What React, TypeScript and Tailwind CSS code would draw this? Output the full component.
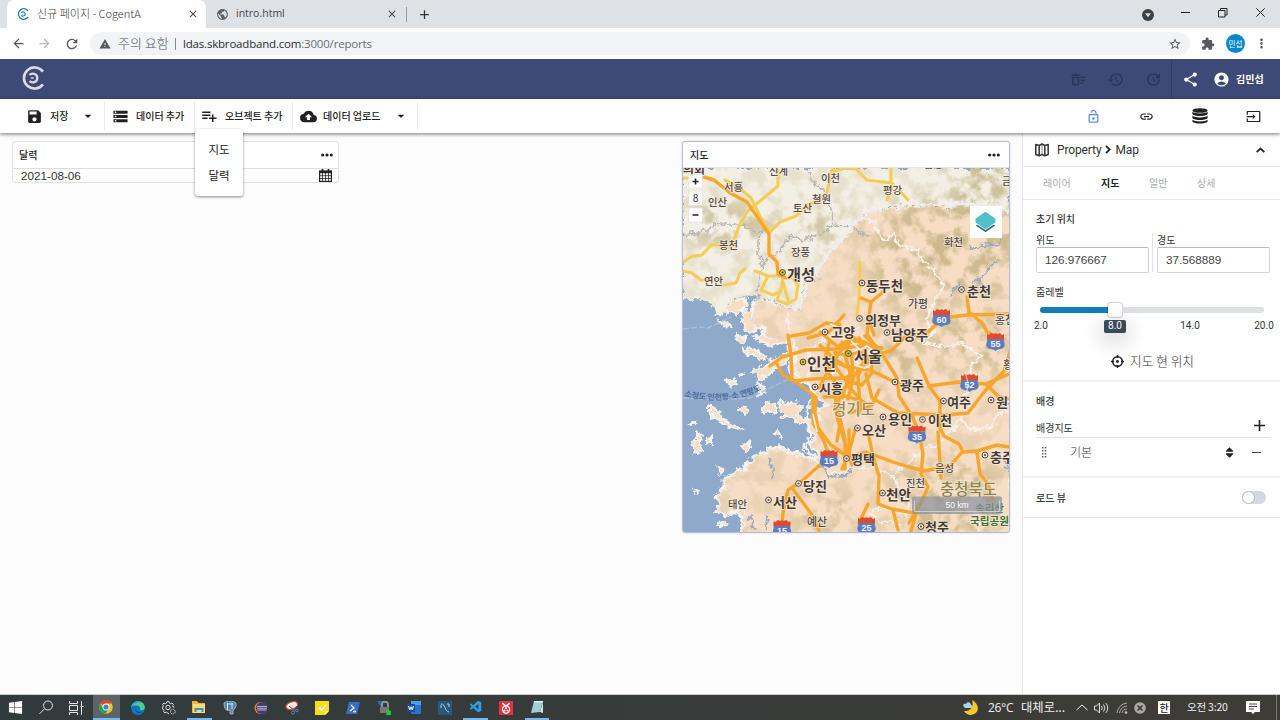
import React from "react";
import {
  MdSave, MdStorage, MdPlaylistAdd, MdCloudUpload, MdArrowDropDown, MdHistory, MdUpdate, MdShare,
  MdAccountCircle, MdOutlineLockOpen, MdLink, MdInput, MdExtension, MdMoreVert, MdRefresh,
  MdArrowBack, MdArrowForward, MdWarning, MdPublic, MdStarBorder, MdClose, MdAdd, MdOutlineDeleteSweep,
} from "react-icons/md";
import { FaWindows, FaSort } from "react-icons/fa";
import { VscVscode } from "react-icons/vsc";

const KR = "font-['Noto_Sans_CJK_KR',sans-serif]";

/* ---------- logo ---------- */
function Logo({ size, color }: { size: number; color: string }) {
  return (
    <svg width={size} height={size} viewBox="0 0 24 24" fill="none" stroke={color} strokeWidth="2.600">
      <path d="M22 5.600A10.600 10.600 0 1 0 22 18.400" />
      <path d="M8.500 9.100C10.500 6.800 16.300 7.200 16.300 12s-5.800 5.200-7.800 2.900" strokeWidth="2.300" />
      <path d="M9.800 12h3" strokeWidth="1.400" />
    </svg>
  );
}

/* ---------- browser chrome ---------- */
function Browser() {
  return (
    <>
      <div className="flex h-[28px] shrink-0 bg-[#dee1e6] text-[10.5px] text-[#45494d]">
        <div className="w-[7px]" />
        <div className="flex w-[199px] items-center rounded-t-[7px] bg-white pl-[10px] pr-[5px]">
          <Logo size={12} color="#167fa6" />
          <span className={`ml-[8px] w-[150px] whitespace-nowrap pb-[2px] text-[11px] font-light text-[#333] ${KR}`}>신규 페이지 - CogentA</span>
          <MdClose size={12} />
        </div>
        <div className="flex w-[200px] items-center pl-[10px]">
          <MdPublic size={13} className="text-[#5f6368]" />
          <span className="ml-[7px] w-[150px] font-['Open_Sans',sans-serif] text-[10.5px]">intro.html</span>
          <MdClose size={12} />
        </div>
        <div className="mt-[7px] h-[15px] w-px bg-[#9a9da1]" />
        <div className="flex w-[34px] items-center justify-center"><MdAdd size={15} className="text-[#333]" /></div>
        <div className="flex-1" />
        <div className="flex w-[24px] items-center pl-[2px] pt-px">
          <svg width="12" height="12" viewBox="0 0 12 12"><circle cx="6" cy="6" r="6" fill="#3c4043" /><path d="M3 4.3h6L6 8.3z" fill="#dee1e6" /></svg>
        </div>
        <div className="flex w-[116px] items-center justify-between pb-[3px] pl-[17px] pr-[15px]">
          <svg width="9" height="9"><path d="M0 4.5h9" stroke="#222" /></svg>
          <svg width="10" height="10" fill="none" stroke="#222"><path d="M.5 2.5h6.500v6.500h-6.500zM2.500 2.500v-2h6.500v6.500h-2" /></svg>
          <svg width="9" height="9" stroke="#222"><path d="M.3.3l8.400 8.400M8.700.3l-8.400 8.400" /></svg>
        </div>
      </div>
      <div className="flex h-[31px] shrink-0 items-center bg-white text-[#55585c]">
        <div className="w-[37px] pl-[11px]"><MdArrowBack size={15} /></div>
        <div className="w-[27px]"><MdArrowForward size={15} className="text-[#b4b6b9]" /></div>
        <div className="w-[26px]"><MdRefresh size={16} /></div>
        <div className="flex h-[23px] w-[1100px] items-center rounded-full bg-[#f1f3f4] pl-[9px]">
          <MdWarning size={12} />
          <span className={`ml-[7px] w-[57px] whitespace-nowrap pb-px text-[13px] font-light ${KR}`}>주의 요함</span>
          <span className="mr-[7px] h-[12px] w-px bg-[#888]" />
          <span className="flex-1 whitespace-nowrap font-['Open_Sans',sans-serif] text-[11.500px] tracking-[-0.19px] text-[#6b6e72]"><span className="text-[#2b2d30]">ldas.skbroadband.com</span>:3000/reports</span>
          <MdStarBorder size={14} className="mr-[8px]" />
        </div>
        <div className="w-[36px] pl-[11px]"><MdExtension size={14} /></div>
        <div className={`flex h-[19px] w-[19px] items-center justify-center rounded-full bg-[#0a87cf] text-[7.500px] text-white ${KR}`}>민섭</div>
        <div className="pl-[9px]"><MdMoreVert size={15} /></div>
      </div>
    </>
  );
}

/* ---------- application bars ---------- */
function AppHeader() {
  return (
    <div className="flex h-[40px] shrink-0 items-center bg-[#3d4977]">
      <div className="w-[1070px] pb-[3px] pl-[21px]"><Logo size={24} color="#dcdcdc" /></div>
      <div className="w-[37px] text-[#2b3459]"><MdOutlineDeleteSweep size={17} /></div>
      <div className="w-[38px] text-[#2b3459]"><MdHistory size={17} /></div>
      <div className="w-[26px] text-[#2b3459]"><MdUpdate size={17} /></div>
      <div className="h-full w-px bg-[#333d68]" />
      <div className="w-[41px] pl-[10px] text-white"><MdShare size={17} /></div>
      <div className="w-[23px] text-white"><MdAccountCircle size={17} /></div>
      <span className={`whitespace-nowrap pb-[2px] text-[10px] font-bold text-white ${KR}`}>김민섭</span>
    </div>
  );
}

function Disks() {
  return (
    <svg width="16" height="16" viewBox="0 0 16 16" fill="#222">
      <ellipse cx="8" cy="2.500" rx="7.600" ry="2.300" />
      <path d="M.4 3.800c2.500 2.200 12.700 2.200 15.200 0v2.500c-2 2.400-13.200 2.400-15.200 0zM.4 7.800c2.500 2.200 12.700 2.200 15.200 0v2.500c-2 2.400-13.200 2.400-15.200 0zM.4 11.800c2.500 2.200 12.700 2.200 15.200 0v1.700c-2 2.800-13.200 2.800-15.200 0z" />
    </svg>
  );
}

function ActionBar() {
  const label = `whitespace-nowrap pb-[2px] text-[10px] font-medium ${KR}`;
  return (
    <div className="relative z-10 flex h-[34px] shrink-0 items-center bg-white text-[#222] shadow-[0_1px_4px_rgba(0,0,0,.55)]">
      <div className="flex h-[28px] w-[105px] items-center border-r border-[#ececec] pl-[26px]">
        <MdSave size={17} /><span className={`ml-[7px] w-[30px] ${label}`}>저장</span><MdArrowDropDown size={16} />
      </div>
      <div className="flex h-[28px] w-[90px] items-center border-r border-[#ececec] pl-[7px]">
        <MdStorage size={17} /><span className={`ml-[7px] ${label}`}>데이터 추가</span>
      </div>
      <div className="relative flex h-[28px] w-[98px] items-center border-r border-[#ececec] pl-[5px]">
        <MdPlaylistAdd size={18} /><span className={`ml-[7px] ${label}`}>오브젝트 추가</span>
        <div className={`absolute left-0 top-[27px] flex h-[67px] w-[48px] flex-col items-center rounded-[3px] bg-white pt-[7px] text-[11.500px] leading-[26px] shadow-[0_1px_3px_rgba(0,0,0,.45)] ${KR}`}>
          <span>지도</span><span>달력</span>
        </div>
      </div>
      <div className="flex h-[28px] w-[125px] items-center border-r border-[#ececec] pl-[7px]">
        <MdCloudUpload size={17} /><span className={`ml-[6px] w-[70px] ${label}`}>데이터 업로드</span><MdArrowDropDown size={16} />
      </div>
      <div className="flex-1" />
      <div className="w-[53px]"><MdOutlineLockOpen size={15} className="text-[#5d8bf0]" /></div>
      <div className="w-[53px]"><MdLink size={15} /></div>
      <div className="w-[54px]"><Disks /></div>
      <div className="w-[34px]"><MdInput size={15} /></div>
    </div>
  );
}

/* ---------- map ---------- */
type Place = [string, number, number, number, string?, number?];
const INK = "#463a35";
const MINOR = "#544a46";
const places: Place[] = [
  ["의회", 683, 170, 22, INK, 700], ["서흥", 724, 187, 19], ["인산", 708, 202, 19], ["신계", 769, 171, 19], ["이천", 821, 178.5, 19],
  ["철원", 812, 199.5, 19], ["토산", 793, 208.5, 19], ["봉천", 719, 245.5, 19], ["장풍", 791, 252, 19], ["연안", 704, 281, 19],
  ["평강", 883, 190, 19], ["금강", 1002, 181, 19], ["금성", 924, 164, 19], ["화천", 944, 242, 19], ["개성", 787, 275, 28, INK, 700],
  ["동두천", 866, 286, 37, INK, 700], ["춘천", 967, 291, 24, INK, 700], ["가평", 908, 304, 20], ["의정부", 865, 320.5, 36, INK, 700],
  ["홍천", 995, 320, 20], ["고양", 831, 332, 24, INK, 700], ["남양주", 891, 335, 37, INK, 700], ["서울", 854, 357, 28, INK, 700],
  ["인천", 807, 364.5, 29, INK, 700], ["시흥", 819, 388.5, 24, INK, 700], ["광주", 900, 385, 24, INK, 700],
  ["경기도", 832, 409, 43, "#988952", 500], ["여주", 947, 402, 24, INK, 700], ["원주", 996, 402, 24, INK, 700], ["횡성", 1003, 365, 20],
  ["용인", 888, 419, 24, INK, 700], ["이천", 928, 420, 24, INK, 700], ["오산", 862, 430, 24, INK, 700],
  ["충주", 990, 457, 24, INK, 700], ["평택", 851, 459, 24, INK, 700], ["음성", 935, 468, 19], ["진천", 906, 483, 19],
  ["당진", 803, 486, 24, INK, 700], ["서산", 773, 502, 24, INK, 700], ["태안", 728, 504, 19], ["천안", 886, 495, 25, INK, 700],
  ["충청북도", 940, 489, 57, "#8f8448", 500], ["청주", 925, 527, 24, INK, 700], ["예산", 807, 522.5, 20],
  ["속리산", 975, 508.5, 29, "#42712f", 600], ["국립공원", 970, 521, 39, "#42712f", 600],
];
const dots: [number, number, boolean?][] = [
  [782.5, 272.5, true], [862, 283], [859.5, 318.5], [961.5, 289.5], [825, 332], [887, 332.500], [803, 362, true], [848.500, 353.500, true],
  [815, 387], [895, 382], [943.500, 401], [991, 400], [883, 417], [922.500, 419.500], [857.500, 428], [985, 455], [846.500, 458.500],
  [798.500, 483.500], [768.500, 500], [882.500, 493], [921, 526.500],
];
const shields: [string, number, number][] = [
  ["60", 941.500, 318], ["55", 995.500, 342], ["52", 969.500, 383], ["35", 917, 434.500], ["15", 829, 459], ["15", 782, 529], ["25", 866.500, 526],
];
const yellowRoads = [
  "M683 178h10M725 180l12 6 14 12 10 20 9 14M778 168v18l-18 15-13 11-8 14-5 15",
  "M683 262l10-6 9-1 9-10h14l6 2M683 271l9 2 9 7 10 1M724 285l12-2 4-10 5-4M770 232l10-10 16-6 10-10 12-6 10-3M827 192l4-20 2-4M831 172l15-4 10 1 11 11 24 3v-14M893 184l-6 16M899 190l9 10",
  "M755 271l13 5h12M768 276l-7 14 12 5 8-4 2-14M781 289l-4 11 10 4 9-5 2-14-8-10M783 282l5 18M860 262l-1 38-2 15",
];
const orangeRoads = [
  "M704 177l10 3 16 13 17 9 22 32v20l8 8 1 12 8 4",
  "M861 298l10 4 12-10M871 302l-2 14-2 18 8 12M840 325l-14-2-17 10-18 3M844 315l-15 17-21 6",
  "M967 297l2 15 14 12 4 8 16 8M941 318l27-3 41-1M942 319l-15 14-22 4-14 14-15 4",
  "M770 366l12-9 24-7 30-1 24-3 22 2M777 364l6 11 10 6 20-2 30-1 16-5M788 335l3 20 1 24 24 18-1 16 3 15 13 17 14 10",
  "M813 395v28l10 16 6 16M830 340l-5 18 4 16 6 8 1 32 9 29 7 22M845 345l-12 17-14 26M820 345l12 12 13 9 23 4M820 332l18 15 15-10 12 10-2 17-12 16-12 15v20l6 24v30",
  "M835 352l12 4 12-4 12 7 1 14-10 12-16-4-10-13zM838 363l13 6 19-6M842 342l10 16 1 21-5 20M850 338l-5 17 5 18-8 25M859 338l8 19-9 19 2 30",
  "M865 336l13 12 8 12 11 18 2 18 13 20 7 16 4 22-2 20 7 13-7 16-12 20M866 374l6 24 26 15 24 1 23 1 23-2 17-22 19-20 7-22M917 358l12 28 11 15v27l4 8 15 8 4 8 14-1 20-6 12 2",
  "M929 386l30-4 27 2 23-10M986 384l13 13 10 2M846 458l20-6 27 10 13 4 18 5 26-5 13-15M977 452l3 22 8 10 5 17M855 430l-7 26-6 13",
  "M868 432l5 24 6 20-1 28 14 5 22 4 5-8M868 504l-9 19M893 510l5 20M919 504l-8 27M822 463l-20 18-14 9-5 23-2 18M792 488l12 16 11 15 4 12M938 432l3 46M840 423l-3 18M849 430v25M879 390l-7 15M870 370l31 15",
  "M847 385l14 15-2 13M824 397l22-1 18 6M850 413l20-7M860 367l17-12M874 335l-5-15M840 345l20-5 20 10",
];
const northLand = "M683 168H1009V214L980 209 960 205 935 207 900 206 880 208 865 214 856 221 845 231 840 241 825 256 817 270 806 287 799 309 789 307 770 301 751 297 740 299 727 306 727 316 716 315 711 304 698 299 683 301Z";
const southLand = "M1012 210L980 209 960 205 935 207 900 206 880 208 865 214 856 221 845 231 840 241 825 256 817 270 806 287 799 309 789 307 770 301 756 300 755 304 749 318 757 329 765 328 763 334 772 340 778 343 790 341 788 350 795 357 788 365 791 375 799 381 808 385 813 392 821 401 828 405 815 411 820 418 804 420 810 431 816 437 809 443 818 454 816 460 821 464 810 459 791 451 777 447 774 450 768 447 766 452 753 457 752 463 744 465 747 471 738 469 733 475 724 479 724 487 716 496 720 503 716 511 728 515 737 510 743 520 742 536H1012Z";
const islands = "M727 303l8-4 12 1 1 6-12 7-8-1zM744 309l8 5 3 17-6 2-7-10zM753 369l12-3 8-7 11-4 7-1-8 10-9 5-5 7-9 3-8-6zM744 350l5-3 9 4 9 7-5 2-8-5h-7zM754 337l8-4 10 6 8 5-8 2-10-4zM763 407l4-5 8 1 1 8-7 2-6-2zM781 401l7 4 7-3 7 6-4 8 10 4-7 6-8-8-9-1-5-7zM710 404l6 5 6 6-4 4-8-6zM720 419l10 4 12 6-5 2-16-8zM740 407l9 2-3 5-8-4zM758 382l5 5 2 6-5 2zM691 443l3-4 5 3 3 9-6 2zM697 432l5 4-2 7-3-3zM707 438l4-1v6l-4 1zM711 415l4-1v4l-4 1zM691 424l4-3 1 3zM727 381l6-1 2 4-6 3zM744 452l7-5-1-5-7 3zM719 320l9 2 3 5-8-1zM737 335l10 4-3 5-8-5zM774 432l4-3 2 8zM718 467l7 3-4 5zM741 509l3-3 2 5zM694 490l3 1-2 2zM720 521l8 3-8 3zM736 375l6-2 1 2z";

function MapView() {
  return (
    <svg className="block h-[364px] w-[326px]" viewBox="683 168 326 364" fontFamily="'Noto Sans CJK KR', sans-serif">
      <defs>
        <filter id="relief" x="0" y="0" width="100%" height="100%" colorInterpolationFilters="sRGB">
          <feTurbulence type="fractalNoise" baseFrequency=".06" numOctaves="5" seed="12" />
          <feColorMatrix values="0 0 0 0 .7  0 0 0 0 .64  0 0 0 0 .42  0 4.500 0 0 -1.950" />
        </filter>
        <filter id="coast" x="-5%" y="-5%" width="110%" height="110%" colorInterpolationFilters="sRGB">
          <feTurbulence type="fractalNoise" baseFrequency=".18" numOctaves="3" seed="4" />
          <feDisplacementMap in="SourceGraphic" scale="9" xChannelSelector="R" yChannelSelector="G" />
        </filter>
        <filter id="lumpy"><feGaussianBlur stdDeviation="12" /></filter>
        <clipPath id="landClip"><path d={northLand} /><path d={southLand} /></clipPath>
        <mask id="hills">
          <rect x="683" y="168" width="326" height="364" fill="#4c4c4c" />
          <g filter="url(#lumpy)" fill="#fff">
            <ellipse cx="920" cy="255" rx="48" ry="55" /><ellipse cx="985" cy="215" rx="38" ry="85" />
            <ellipse cx="970" cy="345" rx="35" ry="30" /><ellipse cx="900" cy="360" rx="18" ry="35" />
            <ellipse cx="730" cy="225" rx="45" ry="20" /><ellipse cx="820" cy="225" rx="30" ry="16" />
            <ellipse cx="950" cy="500" rx="60" ry="38" /><ellipse cx="825" cy="515" rx="25" ry="20" />
          </g>
        </mask>
      </defs>
      <rect x="683" y="168" width="326" height="364" fill="#8fa9cb" />
      <g filter="url(#coast)">
        <path d={southLand} fill="#f6ddc4" stroke="#f5f2ee" strokeWidth="3" />
        <path d={islands} fill="#f6ddc4" stroke="#f3f2ee" strokeWidth="2" />
        <path d={northLand} fill="#f3efe4" />
      </g>
      <g clipPath="url(#landClip)"><g mask="url(#hills)"><rect x="683" y="168" width="326" height="364" filter="url(#relief)" opacity=".62" /></g></g>
      <g filter="url(#coast)" fill="none">
        <path d="M683 235l17-3 18-8 22 0 15 8 8-2M763 230l-5 10v14l5 8-4 14-2 13 2 9M765 262l12-9 14-17 12 4 20-6 7-9 23 1 7 6 11 4M807 168l6 13 15 14 3 13 1 19" stroke="#b7b4b3" strokeWidth="1.500" />
        <path d="M727 305l3-6 18-2 22 3 17 8 12 2 4-20 3-9 16-1" stroke="#aeb2bb" strokeWidth="1.200" strokeDasharray="3 2" />
        <path d="M799 309l8-22 10-16 15-22 12-12 12-16 20-12 35-3 50-3 50 7" stroke="#efedee" strokeWidth="3.500" />
        <path d="M865 214c20-9 50-10 90-6" stroke="#c47e70" strokeWidth=".8" strokeDasharray="3 3" />
        <path d="M866 220l9 3 5 15 6 3 8-8 4 12 13 4 7 1 4 12 10 6 6 8 5 9-6 13-8 14-1 12 6 10-13 8 7 2 20 3 13-4 13 8 8 5-11 7-2 22-5 14-2 22 9 8 18-1 9-13 9-6 10 5 4 6" stroke="#f6f2ee" strokeWidth="2.100" />
        <path d="M964 411l-10 18-5 4-12 12-16 5-7 8-16 13-4 7-15-9-15-1-17 1-8 6-12-3M894 478l6 15 10 10-3 12-12-4-12-4-13 6 10 8 17 2 0 12M980 531l-3-14-9-13 6-5" stroke="#f4f0ed" strokeWidth="2" />
        <path d="M787 310l3 25 6 12-2 22 10 13 10-13-5-18 15-10-5-14 14 7 10 5 12 4 2 18-10 16-12-6-14 9-9 17-5 18 3 21-7 14 13 8" stroke="#f5f1ee" strokeWidth="2.300" />
        <path d="M969 249l7-1 5-3 14 1 7-5M972 283l8-3 7-10 6-5 4-5M977 279l5 8" stroke="#93a8ca" strokeWidth="2" />
        <path d="M951 297l4-9 5-5M768 458l5 11-1 11M750 514l4 16M767 516l-1 15M821 465l8 12 15-1 7-6M1005 461l3 11" stroke="#9aa9c2" strokeWidth="2" />
      </g>
      <path d="M683 398l35 2 32-2 20-10 19-9M683 329l15-2 10 1 23-11" fill="none" stroke="#aabdd9" strokeWidth="1.500" strokeDasharray="6 2" />
      <g fill="none" strokeLinejoin="round" strokeLinecap="round">
        {yellowRoads.map((d) => <path key={d} d={d} stroke="#f4cd57" strokeWidth="3.100" />)}
        {orangeRoads.map((d) => <path key={d} d={d} stroke="#f7a62d" strokeWidth="3.400" />)}
      </g>
      <path d="M854 365l11 3 9-6M830 324l20 8 10-5M813 414l4 18M851 341l9 9 7-4 8 6" fill="none" stroke="#f4eeea" strokeWidth="1.700" />
      <path id="ferry" d="M684 396Q728 407 765 388" fill="none" />
      <text fontSize="8" fontWeight="600" fill="#4b6fa5"><textPath href="#ferry" textLength="79">소청도 인천항-소 연평도</textPath></text>
      {shields.map(([n, x, y]) => (
        <g key={n + x} transform={`translate(${x} ${y})`}>
          <path d="M-8.500-3h17c-1 3 2 5 0 8-2 3-5 1-8.500 4-3.500-3-6.500-1-8.500-4-2-3 1-5 0-8z" fill="#5b7cbe" />
          <path d="M-8.500-3v-5l2 1 2-2 3 1 1.500-1 1.500 1 3-1 2 2 2-1v5z" fill="#e04a2f" />
          <text y="5.300" textAnchor="middle" fontSize="9" fontWeight="700" fill="#f1f3fa" fontFamily="Liberation Sans">{n}</text>
        </g>
      ))}
      {dots.map(([x, y, hot]) => (
        <g key={`${x}-${y}`}>
          <circle cx={x} cy={y} r="2.900" fill={hot ? "#e8d02c" : "#f8eadb"} stroke="#4d4540" strokeWidth="1" />
          <circle cx={x} cy={y} r="1.100" fill="#4d4540" />
        </g>
      ))}
      {places.map(([t, x, y, w, color = MINOR, weight = 500]) => {
        const size = w / (t.length * 0.92);
        return (
          <text key={t + x} x={x} y={y + size * 0.36} fontSize={size} fontWeight={weight} fill={color} stroke="#f8eee2" strokeWidth="1.600" strokeOpacity=".75" paintOrder="stroke">{t}</text>
        );
      })}
      <path d="M791 277l9 3 12 0M965 371l3 12-2 16" fill="none" stroke="#f4ecdf" strokeWidth="1" strokeOpacity=".8" />
      <g fill="#fff" stroke="#ddd" strokeWidth=".6"><rect x="688.500" y="174.500" width="14" height="13.500" /><rect x="688.500" y="191" width="14" height="14.500" fillOpacity=".85" /><rect x="688.500" y="208" width="14" height="14" /></g>
      <path d="M692.500 181.500h6M695.500 178.500v6M692.500 215h6" stroke="#222" strokeWidth="1.600" />
      <text x="695.500" y="202" fontSize="10" textAnchor="middle" fill="#444" fontFamily="Roboto">8</text>
      <rect x="970" y="206" width="32" height="32" fill="#fff" />
      <g strokeLinejoin="round">
        <path d="M976.500 225l9 6 9-6" fill="#2f6f80" stroke="#2f6f80" strokeWidth="2" />
        <path d="M976.500 223l9 6 9-6" fill="#fff" stroke="#fff" strokeWidth="1.600" />
        <path d="M977 219.500l8.500-6 8.500 6v2l-8.500 6-8.500-6z" fill="#4fc0ca" stroke="#4fc0ca" strokeWidth="3" />
      </g>
      <rect x="912" y="496.500" width="90" height="17.500" rx="2" fill="#8c919e" fillOpacity=".72" />
      <path d="M914.500 500.500v11h85v-11" fill="none" stroke="#d9dbe0" strokeOpacity=".75" />
      <text x="957" y="508" fontSize="8.500" textAnchor="middle" fill="#fff" fontFamily="Liberation Sans">50 km</text>
    </svg>
  );
}

function Dots() {
  return <svg width="12" height="4" fill="#222"><circle cx="1.700" cy="2" r="1.600" /><circle cx="6" cy="2" r="1.600" /><circle cx="10.300" cy="2" r="1.600" /></svg>;
}

function Canvas() {
  return (
    <div className="flex w-[1022px] shrink-0 items-start bg-[#fcfcfc] pl-[12px] pt-[8px]">
      <div className="h-[42px] w-[327px] overflow-hidden rounded-[3px] border border-[#e2e2e2] bg-white">
        <div className="flex h-[27px] items-center justify-between border-b border-[#dedede] pl-[6px] pr-[5px]">
          <span className={`pb-px text-[10px] font-medium text-[#222] ${KR}`}>달력</span><Dots />
        </div>
        <div className="flex h-[13px] items-center justify-between pl-[8px] pr-[6px]">
          <span className="font-['Liberation_Sans',sans-serif] text-[11.700px] leading-[13px] text-[#333]">2021-08-06</span>
          <svg width="13" height="13" viewBox="0 0 13 13" fill="none" stroke="#222"><rect x=".6" y="2" width="11.800" height="10.400" strokeWidth="1.200" /><path d="M.5 3.200h12" strokeWidth="2.200" /><path d="M.5 6.700h12M.5 9.500h12M3.500 4v8M6.500 4v8M9.500 4v8" strokeWidth=".8" /><path d="M3.500 0v3M9.500 0v3" strokeWidth="1.700" /></svg>
        </div>
      </div>
      <div className="ml-[343px] w-[328px] overflow-hidden rounded-[3px] border border-[#b6bdd2] bg-white shadow-[0_0_2px_#c6cbdc]">
        <div className="flex h-[26px] items-center justify-between border-b border-[#e6e6e6] pl-[7px] pr-[9px]">
          <span className={`text-[10px] font-medium text-[#222] ${KR}`}>지도</span><Dots />
        </div>
        <MapView />
      </div>
    </div>
  );
}

/* ---------- property panel ---------- */
function PropertyPanel() {
  const input = "flex h-[26px] w-[113px] items-center rounded-[2px] border border-[#d4d4d4] border-t-[#b9b9b9] pb-px pl-[8px] font-['Liberation_Sans',sans-serif] text-[11.700px] text-[#444]";
  return (
    <div className={`w-[258px] shrink-0 border-l border-[#e6e6e6] bg-white text-[10px] text-[#333] ${KR}`}>
      <div className="flex h-[34px] items-center border-b border-[#e8e8e8] pl-[12px] font-['Roboto',sans-serif] text-[12px]">
        <svg width="14" height="14" viewBox="0 0 14 14" fill="none" stroke="#333" strokeWidth="1.500" strokeLinejoin="round"><path d="M.8 1.500l3.400 1 2.800-1.500 2.800 1.500 3.400-1v10l-3.400 1.300-2.800-1.400-2.800 1.400-3.400-1.300zM4.200 2.500v10.200M9.800 2.500v10.200" /><path d="M7 1v10.500" strokeWidth=".6" /></svg>
        <span className="ml-[8px] tracking-[-.12px]">Property</span>
        <svg className="mx-[4px]" width="6" height="9" fill="none" stroke="#222" strokeWidth="1.800"><path d="M1 .8l3.700 3.700L1 8.200" /></svg>
        <span className="flex-1 tracking-[-.12px]">Map</span>
        <svg className="mr-[15px]" width="9" height="6" fill="none" stroke="#222" strokeWidth="1.800"><path d="M.7 5.200l3.800-3.800 3.800 3.800" /></svg>
      </div>
      <div className="flex h-[33px] items-center border-b border-[#e8e8e8] pb-[2px] pl-[20px] text-[#aaa]">
        <span className="w-[58px]">레이어</span><span className="w-[48px] font-bold text-[#222]">지도</span><span className="w-[48px]">일반</span><span>상세</span>
      </div>
      <div className="h-[182px] border-b-2 border-[#f1f1f1] pl-[13px] pr-[10px]">
        <div className="flex h-[33px] items-end pb-[5px] font-medium leading-[18px]">초기 위치</div>
        <div className="flex justify-between">
          <div className="h-[39px] w-[117px] border-r border-[#e4e4e4]"><div className="h-[14px] leading-[13px]">위도</div><div className={input}>126.976667</div></div>
          <div className="w-[113px]"><div className="h-[14px] leading-[13px]">경도</div><div className={input}>37.568889</div></div>
        </div>
        <div className="mt-[10px] h-[18px] leading-[17px]">줌레벨</div>
        <div className="ml-[4px] flex h-[18px] w-[224px] items-center">
          <div className="h-[6px] w-[68px] rounded-l-[3px] bg-[#137cbd]" />
          <div className="h-[14px] w-[14px] rounded-[3px] bg-white shadow-[0_0_1px_1px_rgba(16,22,26,.22)]" />
          <div className="h-[6px] flex-1 rounded-r-[3px] bg-[#dde1e6]" />
        </div>
        <div className="-ml-[6px] -mr-[10px] mt-px flex h-[13px] font-['Roboto',sans-serif] text-[10px] leading-[12px]">
          <span className="w-[62px] shrink-0 pl-[4px]">2.0</span>
          <span className="ml-[12px] h-[13px] w-[22px] shrink-0 rounded-[2px] bg-[#394b59] text-center text-white shadow-[0_6px_18px_5px_rgba(16,22,26,.13)]">8.0</span>
          <span className="ml-[49px] w-[30px] shrink-0 text-center">14.0</span>
          <span className="ml-[44px] w-[30px] shrink-0 text-center">20.0</span>
        </div>
        <div className="mt-[17px] flex h-[22px] items-center pl-[75px] text-[12.700px] font-light">
          <svg width="13" height="13" viewBox="0 0 13 13" fill="none" stroke="#222"><circle cx="6.500" cy="6.500" r="4.800" strokeWidth="1.500" /><path d="M6.500 0v3M6.500 10v3M0 6.500h3M10 6.500h3" strokeWidth="1.500" /><circle cx="6.500" cy="6.500" r="1.400" fill="#222" stroke="none" /></svg>
          <span className="ml-[6px] whitespace-nowrap">지도 현 위치</span>
        </div>
      </div>
      <div className="h-[96px] border-b-2 border-[#f1f1f1] pl-[13px] pr-[10px]">
        <div className="flex h-[38px] items-center pb-[2px] font-medium">배경</div>
        <div className="flex h-[18px] items-center justify-between border-b border-[#e2e2e2] pr-[5px]"><span className="pb-[3px]">배경지도</span><svg className="mb-[7px]" width="11" height="11" stroke="#222" strokeWidth="1.600"><path d="M0 5.500h11M5.500 0v11" /></svg></div>
        <div className="flex h-[29px] items-center text-[12px] font-light">
          <svg width="34" height="11" fill="#555"><path d="M6 0h1.400v1.400H6zM8.800 0h1.400v1.400H8.800zM6 3h1.400v1.400H6zM8.800 3h1.400v1.400H8.800zM6 6h1.400v1.400H6zM8.800 6h1.400v1.400H8.800zM6 9h1.400v1.400H6zM8.800 9h1.400v1.400H8.800z" /></svg>
          <span className="w-[153px] pb-px">기본</span><FaSort size={13} className="text-[#222]" />
          <span className="ml-[16px] h-[1.500px] w-[9px] bg-[#444]" />
        </div>
      </div>
      <div className="flex h-[40px] items-center justify-between border-b border-[#e8e8e8] pb-px pl-[13px] pr-[14px] font-medium">
        <span>로드 뷰</span>
        <div className="flex h-[13px] w-[24px] items-center rounded-full bg-[#d3d9df]"><div className="h-[13px] w-[13px] rounded-full border-[1.500px] border-[#b5bac0] bg-white" /></div>
      </div>
    </div>
  );
}

/* ---------- taskbar ---------- */
const taskIcons: [string, React.ReactNode][] = [
  ["start", <FaWindows size={15} color="#fff" />],
  ["search", <svg width="15" height="15" fill="none" stroke="#e7e7e7"><circle cx="9" cy="5.500" r="4.500" /><path d="M5.500 8.800l-5 5" /></svg>],
  ["views", <svg width="15" height="14" fill="none" stroke="#e7e7e7"><path d="M.5 0v2.500h8V0M.5 4.500h8v5h-8zM.5 14v-2.500h8V14M12.500 0v14M11.500 5.500h3" /></svg>],
  ["chrome", <svg width="14" height="14" viewBox="0 0 14 14"><circle cx="7" cy="7" r="6.800" fill="#f5c51b" /><path d="M7 7L1 3.600A6.800 6.800 0 0 1 13 3.600H7z" fill="#e34133" /><path d="M1 3.600A6.800 6.800 0 0 0 6.600 13.800L9.800 8.400 7 7 4 8.600z" fill="#26a35a" /><circle cx="7" cy="7" r="3.400" fill="#fff" /><circle cx="7" cy="7" r="2.600" fill="#3d7fe8" /></svg>],
  ["edge", <svg width="14" height="14" viewBox="0 0 14 14"><circle cx="7" cy="7" r="6.900" fill="#1475c4" /><path d="M.3 6C1-1 13-2 13.900 6.300c0 3-4 3.800-5.400 2.300 1.500-2-.5-4-3-4C3 4.500 1 5 .3 6z" fill="#4bcf8b" /><path d="M.3 6C1.500-.2 8-.5 10 1.500 6 1 3 2.500 2 4.800z" fill="#25a9d5" /><path d="M5 6.500c-1 4 4 6 7 4-4 3.500-9 .5-7-4z" fill="#0c4c91" /></svg>],
  ["gear", <svg width="14" height="14" viewBox="0 0 14 14" fill="none" stroke="#ddd"><path d="M5 .6h2l.4 1.500 1.300.6 1.400-.7 1.300 1.400-.8 1.300.5 1.200 1.300.4M5 .6l-.5 1.500-1.300.6-1.300-.7L.6 3.400l.7 1.300-.5 1.200L.5 8l1.100.5.4 1.200-.4 1 1.400 1.200 1.300-.7 1.200.4.5 1h1" /><circle cx="6" cy="6.500" r="2.200" /><circle cx="10.800" cy="10.600" r="2.300" strokeDasharray="1.300 .6" /></svg>],
  ["files", <svg width="14" height="12"><path d="M0 0h5l1.500 2H13v10H0z" fill="#f2b531" /><path d="M1 3h12v9H1z" fill="#ffdc73" /><path d="M2.500 11V7h9v4h-2V9h-5v2z" fill="#3a91d5" /></svg>],
  ["postgres", <svg width="14" height="14"><path d="M1 2C4-.5 10-.5 13 2c.5 3-.5 6-3 7v4H7V9C3 11 1 7 1 2z" fill="#5584ac" stroke="#c5d6e2" strokeWidth=".7" /><path d="M4.500 2v7M9 2v6M4 3h6" stroke="#d9e6ee" fill="none" /></svg>],
  ["eclipse", <svg width="14" height="14"><circle cx="6.500" cy="7" r="6" fill="#e78728" /><circle cx="8" cy="7" r="6" fill="#433b72" /><path d="M3 5.500h10M3 7.300h10M3.500 9h9" stroke="#d8d6e8" strokeWidth=".8" /></svg>],
  ["snip", <svg width="14" height="14"><ellipse cx="7" cy="4.500" rx="6" ry="3.500" transform="rotate(-20 7 5)" fill="#f4eeee" stroke="#d84848" strokeWidth="1.300" /><path d="M4 5l6 5m2-5l-4 5" stroke="#c83838" /><circle cx="8" cy="11.500" r="1.600" fill="none" stroke="#3591ca" /><circle cx="12" cy="9.500" r="1.300" fill="none" stroke="#3591ca" /></svg>],
  ["notes", <svg width="14" height="14"><path d="M0 0h14v10l-4 4H0z" fill="#f9dd16" /><path d="M14 10h-4v4z" fill="#fff4a0" /><path d="M4 6.500l2.500 2.500 4.500-5" fill="none" stroke="#fff" strokeWidth="1.800" /></svg>],
  ["shell", <svg width="14" height="12"><path d="M3 0h11l-3 12H0z" fill="#376fc5" /><path d="M5 3l3 3-4 3M7 9.500h3" fill="none" stroke="#fff" strokeWidth="1.300" /></svg>],
  ["lock", <svg width="14" height="14"><path d="M0 0h6v5H3z" fill="#2369b4" /><path d="M5 6V3c0-3 6-3 6 0v3" fill="none" stroke="#9a9a9a" strokeWidth="1.800" /><path d="M3 6h9v6H3z" fill="#777" /><path d="M7 9l2 1.500L11 8l2 2 1-1v5H8.500l1.500-2z" fill="#18cf39" /></svg>],
  ["word", <svg width="14" height="13"><path d="M4 0h10v13H4z" fill="#2774cf" /><path d="M4 0h10v4H4z" fill="#41a5ee" /><path d="M0 3h8v8H0z" fill="#174e9d" /><path d="M1.500 5l1.200 4L4 5.700 5.300 9l1.200-4" fill="none" stroke="#fff" /></svg>],
  ["workbench", <svg width="14" height="14"><path d="M0 0h14v14H0z" fill="#28587e" /><path d="M3 3c5 0 3 7 8 8M3 4v3M9 3h2v3" fill="none" stroke="#b5ccdc" /></svg>],
  ["code", <VscVscode size={14} color="#2ba0e5" />],
  ["ladybug", <svg width="14" height="14"><path d="M0 0h14v14H0z" fill="#e2333c" /><circle cx="7" cy="8.500" r="3.600" fill="none" stroke="#fff" strokeWidth="1.200" /><path d="M3.500 2l2.200 2.500h2.600L10.500 2" stroke="#fff" fill="none" strokeWidth="1.400" /><circle cx="7" cy="7" r="1.100" fill="#fff" /><circle cx="5.500" cy="9.500" r="1.100" fill="#fff" /><circle cx="8.500" cy="9.500" r="1.100" fill="#fff" /></svg>],
  ["memo", <svg width="14" height="14"><path d="M4 1h9l-3 11-9 1z" fill="#9cd0d6" /><path d="M4 1h9v1.500H4z" fill="#edf4f2" /><path d="M10 12l3-10v11z" fill="#d9e0dd" /></svg>],
];
const running = ["files", "code", "memo"];

function Taskbar() {
  return (
    <div className={`flex h-[25px] shrink-0 items-center bg-linear-to-r from-[#313b3d] to-[#3e3c37] text-[#eee] ${KR}`}>
      {taskIcons.map(([name, icon]) => (
        <div key={name} className={`flex h-full w-[30.700px] items-stretch ${name === "chrome" ? "pl-[1px] pr-[3px]" : ""}`}>
          <div className={`flex w-full items-center justify-center ${name === "chrome" ? "border-b-2 border-[#76b9ed] bg-[#5c6465]" : running.includes(name) ? "mx-[3px] border-b-2 border-[#76b9ed]" : ""}`}>{icon}</div>
        </div>
      ))}
      <div className="flex-1" />
      <div className="w-[25px]"><svg width="16" height="16"><path d="M9 0c8 4 8 14-1 15-3 0-6-2-7-4 7 1 10-5 8-11z" fill="#f9c728" /><path d="M1 7c-2-2 0-4 2-3 1-3 5-2 5 1 2 0 2 3 0 3H2z" fill="#a9d6ee" /></svg></div>
      <span className="w-[33px] whitespace-nowrap font-['Open_Sans',sans-serif] text-[12px] tracking-[-.3px]">26°C</span>
      <span className="w-[55px] whitespace-nowrap pb-px text-[12.300px]">대체로...</span>
      <div className="w-[18px]"><svg width="12" height="7" fill="none" stroke="#eee"><path d="M.5 6L6 1l5.500 5" /></svg></div>
      <div className="w-[22px]"><svg width="15" height="12" fill="none" stroke="#ddd"><path d="M.5 4h2l3-3v10l-3-3h-2zM7.500 4q1.500 2 0 4M9.500 2.500q3 3.500 0 7M11.800 1q4 5 0 10" /></svg></div>
      <div className="w-[18px]"><svg width="12" height="12" fill="none" stroke="#aaa"><path d="M1 11A11 11 0 0 1 11 1M3.500 11A8 8 0 0 1 11 4M6 11a5 5 0 0 1 5-4" /><circle cx="10" cy="10.500" r="1" fill="#ddd" /></svg></div>
      <div className="w-[24px]"><svg width="12" height="12"><circle cx="6" cy="6" r="5.800" fill="#aaa" /><path d="M3.500 3.500l5 5m0-5l-5 5" stroke="#333" strokeWidth="1.500" /></svg></div>
      <div className="flex h-[13px] w-[12px] items-center justify-center bg-white text-[10px] font-medium text-[#222]">한</div>
      <span className="ml-[17px] w-[59px] whitespace-nowrap pb-px text-[10.500px] tracking-[-.2px]">오전 3:20</span>
      <div className="w-[30px]"><svg width="14" height="13"><path d="M0 0h14v11H9l-2 2-2-2H0z" fill="#fff" /><path d="M3 3h8M3 5.500h8M3 8h5" stroke="#444" /></svg></div>
      <div className="h-full w-[4px] border-l border-[#777]" />
    </div>
  );
}

export default function App() {
  return (
    <div className="flex h-[720px] w-[1280px] flex-col overflow-hidden bg-white">
      <Browser />
      <AppHeader />
      <ActionBar />
      <div className="flex min-h-0 flex-1 border-b border-[#ccc]">
        <Canvas />
        <PropertyPanel />
      </div>
      <Taskbar />
    </div>
  );
}
